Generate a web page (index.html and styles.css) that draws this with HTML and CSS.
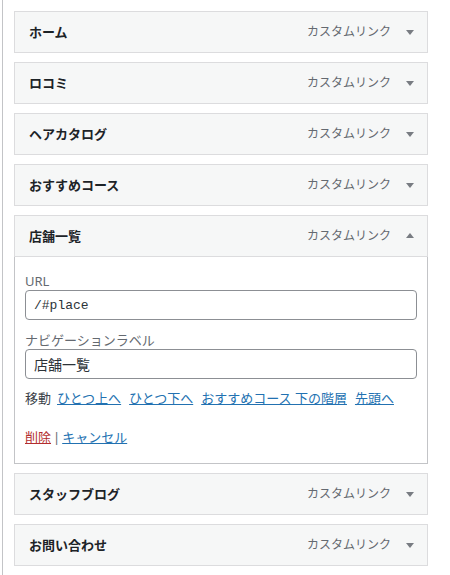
FILE: index.html
```html
<!DOCTYPE html>
<html lang="ja">
<head>
<meta charset="utf-8">
<link rel="stylesheet" href="styles.css">
</head>
<body>
<div class="page">
  <ul class="menu">
    <li class="item">
      <div class="handle"><span class="title">ホーム</span><span class="controls"><span class="type">カスタムリンク</span><span class="arrow"></span></span></div>
    </li>
    <li class="item">
      <div class="handle"><span class="title">ロコミ</span><span class="controls"><span class="type">カスタムリンク</span><span class="arrow"></span></span></div>
    </li>
    <li class="item">
      <div class="handle"><span class="title">ヘアカタログ</span><span class="controls"><span class="type">カスタムリンク</span><span class="arrow"></span></span></div>
    </li>
    <li class="item">
      <div class="handle"><span class="title">おすすめコース</span><span class="controls"><span class="type">カスタムリンク</span><span class="arrow"></span></span></div>
    </li>
    <li class="item active">
      <div class="handle"><span class="title">店舗一覧</span><span class="controls"><span class="type">カスタムリンク</span><span class="arrow up"></span></span></div>
      <div class="settings">
        <div class="field first">
          <div class="label">URL</div>
          <div class="input mono">/#place</div>
        </div>
        <div class="field">
          <div class="label">ナビゲーションラベル</div>
          <div class="input">店舗一覧</div>
        </div>
        <div class="move"><span class="move-label">移動</span><a class="link" href="#">ひとつ上へ</a><a class="link" href="#">ひとつ下へ</a><a class="link" href="#">おすすめコース 下の階層</a><a class="link" href="#">先頭へ</a></div>
        <div class="actions"><a class="delete" href="#">削除</a><span class="sep">|</span><a class="cancel" href="#">キャンセル</a></div>
      </div>
    </li>
    <li class="item">
      <div class="handle"><span class="title">スタッフブログ</span><span class="controls"><span class="type">カスタムリンク</span><span class="arrow"></span></span></div>
    </li>
    <li class="item">
      <div class="handle"><span class="title">お問い合わせ</span><span class="controls"><span class="type">カスタムリンク</span><span class="arrow"></span></span></div>
    </li>
  </ul>
</div>
</body>
</html>
```
FILE: styles.css
```css
html, body {
  margin: 0;
  padding: 0;
  background: #fff;
}
body {
  font-family: "Noto Sans", "Noto Sans CJK JP", sans-serif;
  font-size: 13px;
  color: #1d2327;
}
.page {
  margin-left: 2px;
  border-left: 1px solid #c3c4c7;
  min-height: 575px;
  box-sizing: border-box;
  padding: 11px 0 0 11px;
}
.menu {
  list-style: none;
  margin: 0;
  padding: 0;
  width: 414px;
  display: flex;
  flex-direction: column;
  gap: 9px;
}
.item {
  margin: 0;
}
.handle {
  height: 42px;
  box-sizing: border-box;
  border: 1px solid #dcdcde;
  background: #f6f7f7;
  display: flex;
  align-items: center;
  justify-content: space-between;
  padding: 0 13px 0 14px;
}
.title {
  font-weight: 700;
  font-size: 13px;
  line-height: 18px;
  color: #1d2327;
}
.controls {
  display: flex;
  align-items: center;
  gap: 15px;
}
.type {
  font-size: 12px;
  line-height: 18px;
  color: #646970;
}
.arrow {
  width: 0;
  height: 0;
  border-left: 4px solid transparent;
  border-right: 4px solid transparent;
  border-top: 5px solid #787c82;
  margin-top: 1px;
}
.arrow.up {
  border-top: none;
  border-bottom: 5px solid #787c82;
  margin-top: -1px;
}
.settings {
  border: 1px solid #c3c4c7;
  border-top: none;
  padding: 15px 10px 17px;
}
.field + .field {
  margin-top: 11px;
}
.label {
  font-size: 13px;
  line-height: 18px;
  color: #646970;
}
.input {
  height: 30px;
  box-sizing: border-box;
  border: 1px solid #8c8f94;
  border-radius: 4px;
  padding: 0 8px;
  display: flex;
  align-items: center;
  font-size: 14px;
  color: #2c3338;
}
.input.mono {
  font-family: "Liberation Mono", "DejaVu Sans Mono", monospace;
  font-size: 13px;
}
.move {
  margin-top: 10px;
  line-height: 18px;
  color: #3c434a;
  display: flex;
  gap: 8px;
}
.move-label {
  margin-right: -2px;
}
.link {
  color: #2271b1;
  text-decoration: underline;
}
.actions {
  margin-top: 21px;
  line-height: 18px;
  display: flex;
  gap: 2px;
}
.delete {
  color: #b32d2e;
  text-decoration: underline;
}
.cancel {
  color: #2271b1;
  text-decoration: underline;
}
.sep {
  color: #646970;
}
```
